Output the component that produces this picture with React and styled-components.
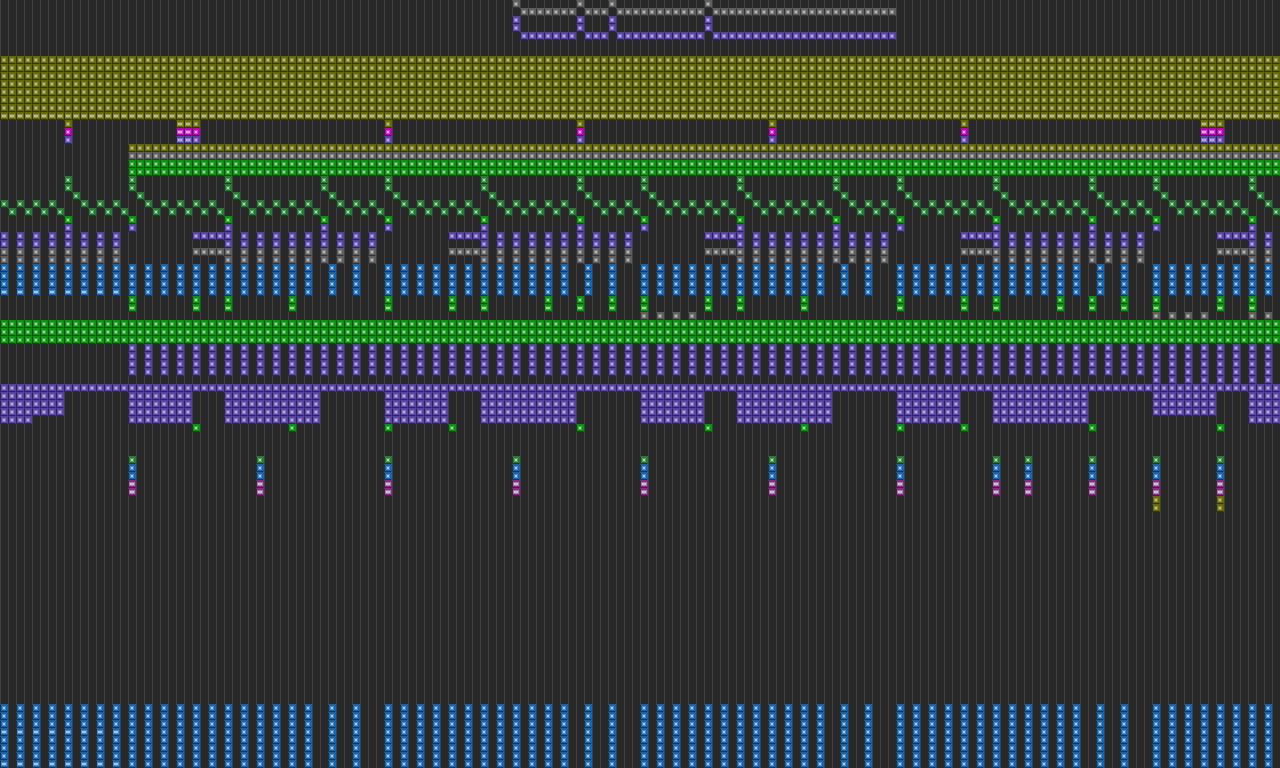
import React from 'react';
import styled, { createGlobalStyle } from 'styled-components';

const COLORS = {
  olive: { body: '#65690a', edge: '#343600', ring: '#8e9040', core: '#b8ba88' },
  magenta: { body: '#b800b8', edge: '#680068', ring: '#d048d0', core: '#e8a0e8' },
  wine: { body: '#842c84', edge: '#4c1a4c', ring: '#a878a8', core: '#d8bcd8' },
  violet: { body: '#56449f', edge: '#2e2266', ring: '#8476c0', core: '#b4aadc' },
  gray: { body: '#5e5e5e', edge: '#363636', ring: '#828282', core: '#b8b8b8' },
  blue: { body: '#1a64ac', edge: '#0c3864', ring: '#4c88c4', core: '#a8c8e8' },
  green: { body: '#0c9210', edge: '#055006', ring: '#3cae40', core: '#94dc98' },
  forest: { body: '#2a7a36', edge: '#14441c', ring: '#5c9c68', core: '#aed0b4' },
};

const span = (from, to) => {
  const out = [];
  for (let c = from; c <= to; c++) out.push(c);
  return out;
};
const evens = (from, to) => span(from, to).filter((c) => c % 2 === 0);

const ANCHORS = [8, 16, 28, 40, 48, 60, 72, 80, 92, 104, 112, 124, 136, 144, 156];
const FIRST_COLS = evens(0, 14);
const BLUE_COLS = [
  ...FIRST_COLS,
  ...[16, 48, 80, 112].flatMap((b) => [...evens(b, b + 22), b + 25, b + 28]),
  ...evens(144, 158),
];
const LONG_ROW = [...span(65, 71), ...span(73, 75), ...span(77, 87), ...span(89, 111)];
const TAPS = [8, 22, 23, 24, 48, 72, 96, 120, 150, 151, 152];
const BUS_COLS = [
  ...FIRST_COLS,
  ...[28, 60, 92, 124].flatMap((a) => [a, ...evens(a + 2, a + 18)]),
  156,
  158,
];
const STUBS = [24, 25, 26, 27, 56, 57, 58, 59, 88, 89, 90, 91, 120, 121, 122, 123, 152, 153, 154, 155];
const BLOCKS = [
  [0, 7], [16, 23], [28, 39], [48, 55], [60, 71], [80, 87], [92, 103], [112, 119], [124, 135], [156, 159],
];
const SPURS = [24, 36, 48, 56, 72, 88, 100, 112, 120, 136, 152];
const DROP_COLS = [16, 32, 48, 64, 80, 96, 112, 124, 128, 136, 144, 152];
const GREEN_PAIRS = [16, 24, 28, 36, 48, 56, 60, 68, 72, 76, 80, 88, 92, 100, 112, 120, 124, 132, 136, 140, 144, 152, 156];

const buildCells = () => {
  const cells = [];
  const put = (row, cols, kind, wide = () => false) =>
    cols.forEach((col) => cells.push({ row, col, kind, wide: wide(col) }));
  const always = () => true;
  const firstCols = (col) => col < 16;
  const wideTaps = (col) => [22, 23, 150, 151].includes(col);

  put(0, [64, 72, 76, 88], 'gray');
  put(1, LONG_ROW, 'gray');
  put(2, [64, 72, 76, 88], 'violet');
  put(3, [64, 72, 76, 88], 'violet');
  put(4, LONG_ROW, 'violet');

  span(7, 13).forEach((row) => put(row, span(0, 159), 'olive'));
  put(14, span(0, 159), 'olive', always);
  put(15, TAPS, 'olive', wideTaps);
  put(16, TAPS, 'magenta', wideTaps);
  put(17, TAPS, 'violet', wideTaps);
  put(18, span(16, 159), 'olive');
  put(19, span(16, 159), 'gray');
  put(20, span(16, 159), 'green');
  put(21, span(16, 159), 'green');

  put(22, ANCHORS, 'forest');
  put(23, ANCHORS, 'forest');
  span(0, 159).forEach((col) => {
    if (ANCHORS.includes(col)) return;
    const row = ANCHORS.includes(col - 1) ? 24 : col % 2 === 0 ? 25 : 26;
    put(row, [col], 'forest');
  });
  put(27, ANCHORS, 'green');
  put(28, ANCHORS, 'violet');

  put(29, [...BUS_COLS, ...STUBS], 'violet');
  put(30, BUS_COLS, 'violet');
  put(31, [...BUS_COLS, ...STUBS], 'gray');
  put(32, BUS_COLS, 'gray');

  [33, 34, 35].forEach((row) => put(row, BLUE_COLS, 'blue'));
  put(36, BLUE_COLS, 'blue', firstCols);
  put(37, GREEN_PAIRS, 'green');
  put(38, GREEN_PAIRS, 'green', always);
  put(39, [80, 82, 84, 86, 144, 146, 148, 150, 156, 158], 'gray');

  [40, 41, 42].forEach((row) => put(row, span(0, 159), 'green'));
  [43, 44, 45, 46].forEach((row) => put(row, evens(16, 158), 'violet'));
  put(47, evens(144, 158), 'violet');
  put(48, span(0, 159), 'violet');
  [49, 50, 51].forEach((row) => {
    BLOCKS.forEach(([a, b]) => put(row, span(a, b), 'violet'));
    put(row, span(144, 151), 'violet');
  });
  put(52, span(0, 3), 'violet');
  BLOCKS.slice(1).forEach(([a, b]) => put(52, span(a, b), 'violet'));
  put(53, SPURS, 'green');

  put(57, DROP_COLS, 'forest');
  put(58, DROP_COLS, 'blue');
  put(59, DROP_COLS, 'blue');
  put(60, DROP_COLS, 'wine', always);
  put(61, DROP_COLS, 'wine', always);
  put(62, [144, 152], 'olive');
  put(63, [144, 152], 'olive');

  span(88, 95).forEach((row) =>
    put(row, BLUE_COLS, 'blue', row === 91 || row === 95 ? firstCols : undefined),
  );
  return cells;
};

const CELLS = buildCells();

const GlobalStyle = createGlobalStyle`
  html, body {
    margin: 0;
    background: #282828;
    overflow: hidden;
  }
`;

const Board = styled.div`
  display: grid;
  grid-template-columns: repeat(160, 8px);
  grid-template-rows: repeat(96, 8px);
  width: 1280px;
  height: 768px;
  overflow: hidden;
  background-color: #282828;
  background-image: linear-gradient(90deg, #424242 1px, transparent 1px);
  background-size: 8px 8px;
`;

const Cell = styled.div`
  box-sizing: border-box;
  width: 8px;
  height: 8px;
  display: flex;
  align-items: center;
  justify-content: center;
  background: ${(p) => COLORS[p.$kind].body};
  border: 1px solid ${(p) => COLORS[p.$kind].body};
  border-left-color: ${(p) => COLORS[p.$kind].edge};
  border-bottom-color: ${(p) => COLORS[p.$kind].edge};

  &::after {
    content: '';
    box-sizing: border-box;
    flex: none;
    width: ${(p) => (p.$wide ? 6 : 4)}px;
    height: 4px;
    border: 1px solid ${(p) => COLORS[p.$kind].ring};
    background: ${(p) => COLORS[p.$kind].core};
  }
`;

const App = () => (
  <>
    <GlobalStyle />
    <Board>
      {CELLS.map(({ row, col, kind, wide }) => (
        <Cell
          key={`${row}-${col}`}
          $kind={kind}
          $wide={wide}
          style={{ gridRow: row + 1, gridColumn: col + 1 }}
        />
      ))}
    </Board>
  </>
);

export default App;
